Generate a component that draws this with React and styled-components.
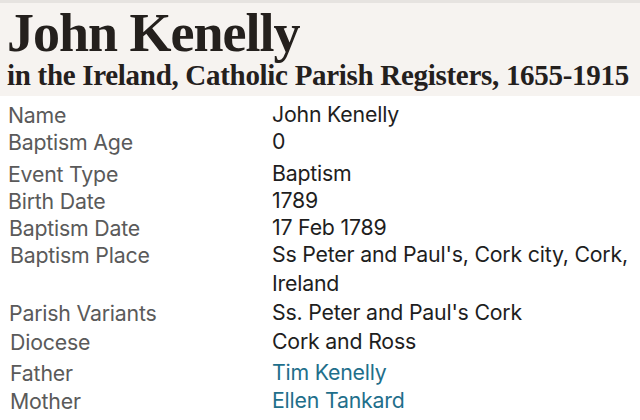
import styled, { createGlobalStyle } from "styled-components";

const Global = createGlobalStyle`
  html, body { margin: 0; padding: 0; background: #ffffff; }
  body { width: 640px; height: 420px; overflow: hidden; }
`;

const Page = styled.div`
  display: flex;
  flex-direction: column;
  width: 640px;
`;

const Header = styled.header`
  background: #f6f3f0;
  border-top: 3px solid #e6e3e0;
  padding: 4px 0 5px 7px;
  display: flex;
  flex-direction: column;
`;

const Title = styled.h1`
  margin: 0;
  font-family: "Liberation Serif", "DejaVu Serif", serif;
  font-weight: bold;
  font-size: 54px;
  line-height: 52px;
  color: #24201d;
  letter-spacing: -1px;
  white-space: nowrap;
`;

const Subtitle = styled.h2`
  margin: 0;
  font-family: "Liberation Serif", "DejaVu Serif", serif;
  font-weight: bold;
  font-size: 29px;
  line-height: 32px;
  color: #24201d;
  letter-spacing: -0.3px;
  white-space: nowrap;
`;

const Facts = styled.div`
  display: flex;
  flex-direction: column;
  padding: 6px 0 0 0;
`;

const Row = styled.div`
  display: grid;
  grid-template-columns: 272px 1fr;
  min-height: ${(p) => p.$h}px;
  font-family: Inter, "Noto Sans", sans-serif;
  font-size: 21.3px;
  line-height: 26px;
  letter-spacing: -0.2px;
`;

const Label = styled.div`
  color: #5a5a5a;
  padding-left: ${(p) => p.$indent || 8}px;
`;

const Value = styled.div`
  color: ${(p) => (p.$link ? "#1f6f8b" : "#1e1e1e")};
  line-height: 29px;
  margin-top: -2px;
  padding-right: 2px;
`;

const facts = [
  { label: "Name", value: "John Kenelly", h: 27 },
  { label: "Baptism Age", value: "0", h: 32 },
  { label: "Event Type", value: "Baptism", h: 26 },
  { label: "Birth Date", value: "1789", h: 26 },
  { label: "Baptism Date", value: "17 Feb 1789", h: 27, indent: 9 },
  { label: "Baptism Place", value: "Ss Peter and Paul's, Cork city, Cork, Ireland", h: 58, indent: 10 },
  { label: "Parish Variants", value: "Ss. Peter and Paul's Cork", h: 29, indent: 9 },
  { label: "Diocese", value: "Cork and Ross", h: 31, indent: 10 },
  { label: "Father", value: "Tim Kenelly", h: 28, link: true, indent: 10 },
  { label: "Mother", value: "Ellen Tankard", h: 27, link: true, indent: 10 },
];

export default function App() {
  return (
    <Page>
      <Global />
      <Header>
        <Title>John Kenelly</Title>
        <Subtitle>in the Ireland, Catholic Parish Registers, 1655-1915</Subtitle>
      </Header>
      <Facts>
        {facts.map((f) => (
          <Row key={f.label} $h={f.h}>
            <Label $indent={f.indent}>{f.label}</Label>
            <Value $link={f.link}>{f.value}</Value>
          </Row>
        ))}
      </Facts>
    </Page>
  );
}
